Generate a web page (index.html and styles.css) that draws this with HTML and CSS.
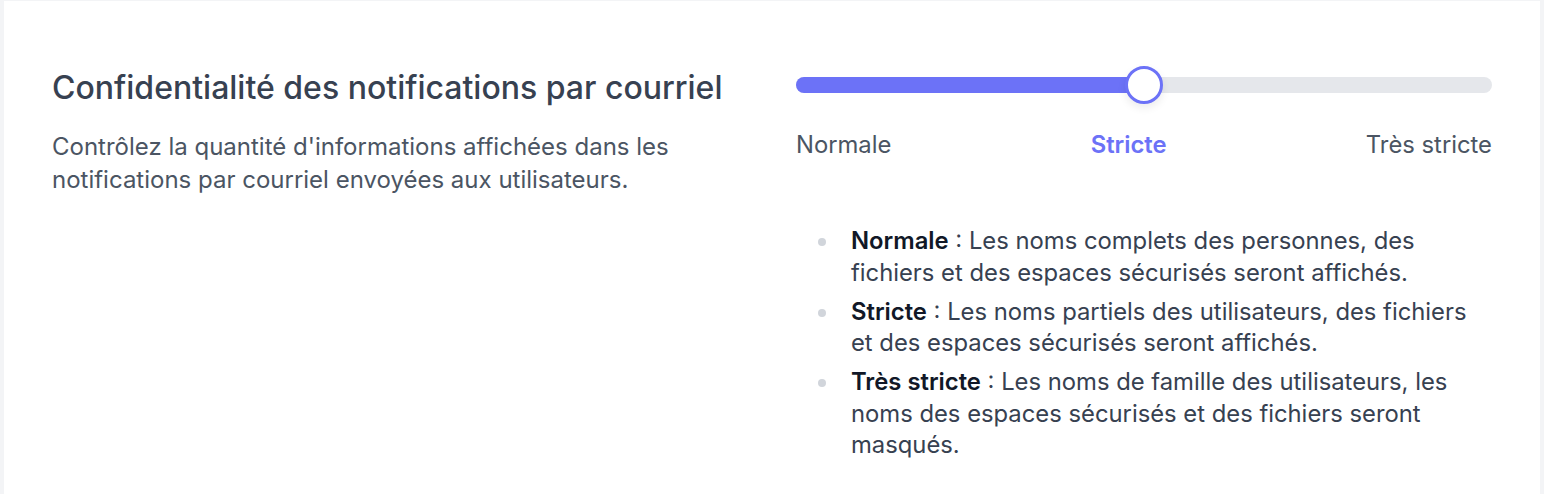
FILE: index.html
```html
<!DOCTYPE html>
<html lang="fr">

<head>
   <meta charset="UTF-8">
   <meta name="viewport" content="width=device-width, initial-scale=1.0">
   <title>Confidentialité des notifications par courriel</title>
   <link rel="stylesheet" href="styles.css">
</head>

<body>
   <section class="card">
      <div class="setting">
         <div class="setting__info">
            <h2 class="setting__title">Confidentialité des notifications par courriel</h2>
            <p class="setting__text">Contrôlez la quantité d'informations affichées dans les notifications par courriel envoyées aux utilisateurs.</p>
         </div>

         <div class="setting__control">
            <div class="slider">
               <div class="slider__track">
                  <div class="slider__fill"></div>
                  <span class="slider__thumb"></span>
               </div>
               <div class="slider__labels">
                  <span class="slider__label">Normale</span>
                  <span class="slider__label slider__label--active">Stricte</span>
                  <span class="slider__label">Très stricte</span>
               </div>
            </div>

            <ul class="levels">
               <li class="levels__item"><b>Normale</b> : Les noms complets des personnes, des fichiers et des espaces sécurisés seront affichés.</li>
               <li class="levels__item"><b>Stricte</b> : Les noms partiels des utilisateurs, des fichiers et des espaces sécurisés seront affichés.</li>
               <li class="levels__item"><b>Très stricte</b> : Les noms de famille des utilisateurs, les noms des espaces sécurisés et des fichiers seront masqués.</li>
            </ul>
         </div>
      </div>
   </section>
</body>

</html>
```

FILE: styles.css
```css
*,
*::before,
*::after {
   box-sizing: border-box;
}

html,
body {
   margin: 0;
   padding: 0;
}

body {
   background-color: #f3f4f6;
   padding: 1px 4px 0;
   font-family: Inter, "Noto Sans", sans-serif;
   color: #374151;
}

.card {
   background-color: #ffffff;
   min-height: 493px;
   padding: 67px 48px 32px;
}

.setting {
   display: grid;
   grid-template-columns: 1fr 1fr;
   gap: 48px;
}

.setting__title {
   margin: 0;
   font-size: 32px;
   line-height: 40px;
   font-weight: 500;
   color: #374151;
}

.setting__text {
   margin: 22px 0 0;
   font-size: 24px;
   line-height: 33px;
   color: #4b5563;
}

.slider__track {
   position: relative;
   height: 16px;
   margin-top: 9px;
   border-radius: 8px;
   background-color: #e5e7eb;
}

.slider__fill {
   width: 50%;
   height: 100%;
   border-radius: 8px;
   background-color: #6c72f7;
}

/* thumb sits over the track */
.slider__thumb {
   position: absolute;
   top: 50%;
   left: 50%;
   width: 38px;
   height: 38px;
   transform: translate(-50%, -50%);
   border: 3px solid #6c72f7;
   border-radius: 50%;
   background-color: #ffffff;
   box-shadow: 0 4px 8px rgba(0, 0, 0, 0.08);
}

.slider__labels {
   display: flex;
   justify-content: space-between;
   margin-top: 36px;
   font-size: 23.8px;
   line-height: 32px;
   color: #4b5563;
}

.slider__label--active {
   font-weight: 600;
   color: #6c72f7;
}

.levels {
   margin: 64px 0 0;
   padding-left: 44px;
   font-size: 23.8px;
   line-height: 31.5px;
   color: #374151;
}

.levels__item {
   padding-left: 11px;
   margin-bottom: 7.5px;
}

.levels__item::marker {
   color: #d1d5db;
}

.levels__item b {
   font-weight: 600;
   color: #111827;
}
```
